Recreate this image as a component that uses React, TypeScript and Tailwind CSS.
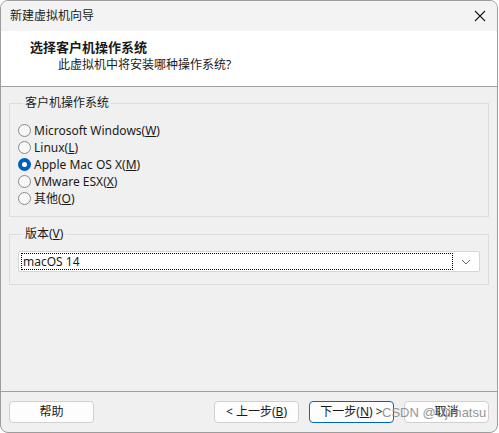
import React from "react";

const font = { fontFamily: '"Noto Sans", "Noto Sans CJK SC", sans-serif' };

type Opt = { pre: string; key: string; post?: string; checked?: boolean };

const options: Opt[] = [
  { pre: "Microsoft Windows(", key: "W", post: ")" },
  { pre: "Linux(", key: "L", post: ")" },
  { pre: "Apple Mac OS X(", key: "M", post: ")", checked: true },
  { pre: "VMware ESX(", key: "X", post: ")" },
  { pre: "其他(", key: "O", post: ")" },
];

function Radio({ checked }: { checked?: boolean }) {
  if (checked) {
    return (
      <span className="w-[13px] h-[13px] rounded-full bg-[#005fb8] flex items-center justify-center shrink-0">
        <span className="w-[5px] h-[5px] rounded-full bg-white" />
      </span>
    );
  }
  return <span className="w-[13px] h-[13px] rounded-full border border-[#8b8b8b] bg-[#f7f7f7] shrink-0" />;
}

function Btn({ children, primary }: { children: React.ReactNode; primary?: boolean }) {
  return (
    <button
      className={
        "w-[85px] h-[22px] rounded-[4px] bg-[#fdfdfd] text-[12px] leading-none text-[#1a1a1a] flex items-center justify-center " +
        (primary ? "border border-[#0067c0]" : "border border-[#d0d0d0]")
      }
    >
      {children}
    </button>
  );
}

export default function App() {
  return (
    <div className="w-[499px] h-[433px] bg-white relative" style={font}>
      <div className="w-[498px] h-[433px] border border-[#9c9c9c] rounded-lg overflow-hidden flex flex-col bg-[#f0f0f0] text-[#1a1a1a]">
        {/* title bar */}
        <div className="h-[30px] shrink-0 bg-[#f3f3f3] flex items-center justify-between pl-[9px] pr-[9px]">
          <span className="text-[12px]">新建虚拟机向导</span>
          <svg width="12" height="12" viewBox="0 0 12 12" className="mr-[2px]">
            <path d="M1 1 L11 11 M11 1 L1 11" stroke="#1a1a1a" strokeWidth="1.1" />
          </svg>
        </div>

        {/* header */}
        <div className="h-[56px] shrink-0 bg-white border-b border-[#a0a0a0] pt-[7px] pl-[29px]">
          <div className="text-[13px] font-bold leading-[18px]">选择客户机操作系统</div>
          <div className="text-[12px] leading-[18px] pl-[28px]">此虚拟机中将安装哪种操作系统?</div>
        </div>

        {/* body */}
        <div className="flex-1 flex flex-col px-[8px] pt-[8px]">
          <fieldset className="border border-[#dcdcdc] h-[122px] pl-[8px] pt-[11px] flex flex-col">
            <legend className="text-[12px] px-[2px] ml-[5px] leading-[16px]">客户机操作系统</legend>
            <div className="flex flex-col">
              {options.map((o) => (
                <label key={o.key} className="h-[17px] flex items-center gap-[3px] text-[12px]">
                  <Radio checked={o.checked} />
                  <span>
                    {o.pre}
                    <span className="underline">{o.key}</span>
                    {o.post}
                  </span>
                </label>
              ))}
            </div>
          </fieldset>

          <fieldset className="border border-[#dcdcdc] h-[59px] mt-[9px] px-[8px] pt-[9px]">
            <legend className="text-[12px] px-[2px] ml-[5px] leading-[16px]">
              版本(<span className="underline">V</span>)
            </legend>
            <div className="h-[21px] bg-white border border-[#d6d6d6] rounded-[2px] flex items-center pl-[2px] pr-[8px]">
              <div className="flex-1 h-[17px] border border-dotted border-black flex items-center text-[12px] pl-[1px]">
                macOS 14
              </div>
              <svg width="10" height="6" viewBox="0 0 10 6" className="ml-[8px]">
                <path d="M1 1 L5 5 L9 1" stroke="#6b6b6b" strokeWidth="1" fill="none" />
              </svg>
            </div>
          </fieldset>
        </div>

        {/* footer */}
        <div className="h-[41px] shrink-0 border-t border-[#a0a0a0] flex items-start pt-[9px] pl-[8px] pr-[8px]">
          <Btn>帮助</Btn>
          <div className="flex-1" />
          <div className="flex gap-[10px]">
            <Btn>
              &lt; 上一步(<span className="underline">B</span>)
            </Btn>
            <Btn primary>
              下一步(<span className="underline">N</span>) &gt;
            </Btn>
            <Btn>取消</Btn>
          </div>
        </div>
      </div>
      <span
        className="absolute left-[382px] top-[404px] text-[13px] text-[#8c8c8c] opacity-90 leading-[18px]"
        style={{ fontFamily: '"Liberation Sans", Arial, sans-serif' }}
      >
        CSDN @Ujimatsu
      </span>
    </div>
  );
}
